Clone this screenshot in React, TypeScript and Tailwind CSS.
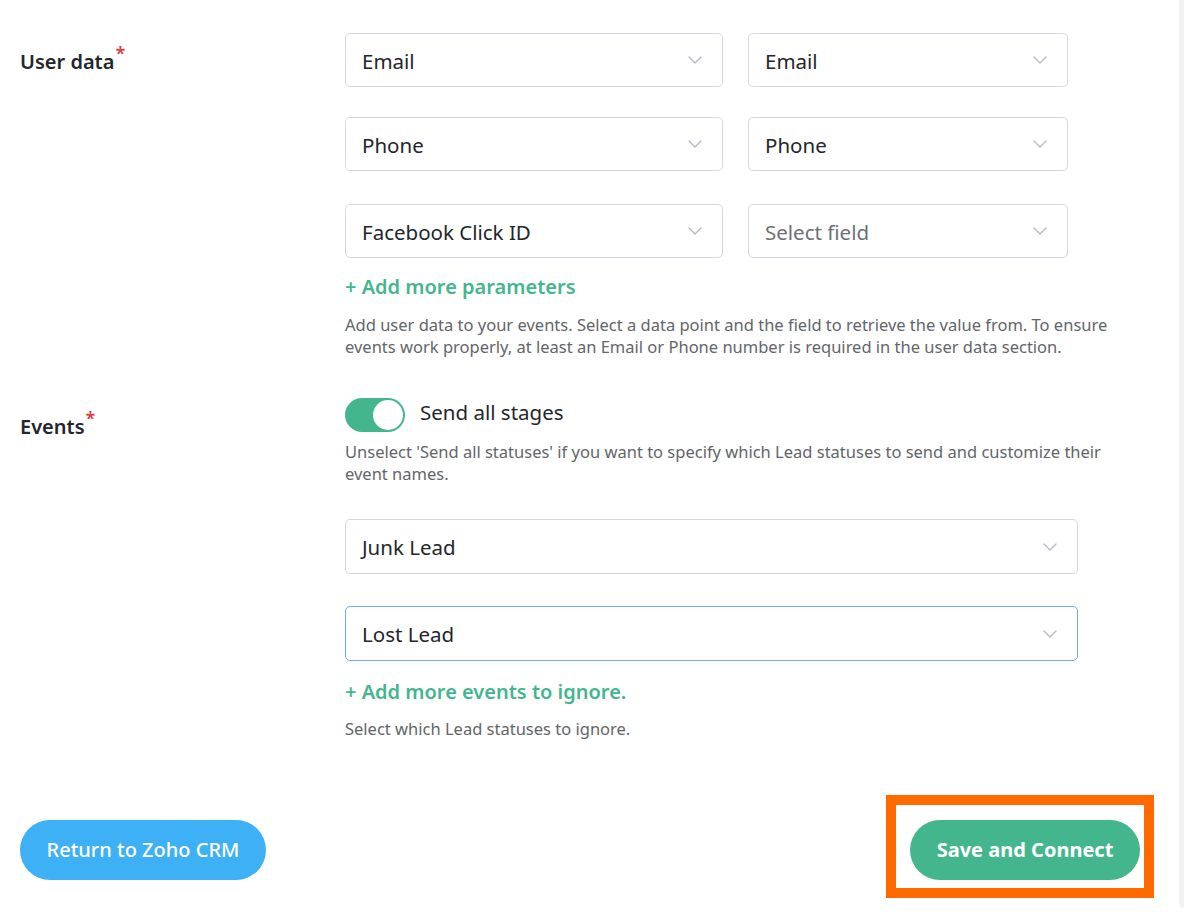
import React from "react";

const font = { fontFamily: '"Noto Sans", "Open Sans", Arial, sans-serif' };

function Chevron() {
  return (
    <svg width="14" height="8" viewBox="0 0 14 8" fill="none" className="shrink-0">
      <path d="M1 1l6 6 6-6" stroke="#b4bac3" strokeWidth="1.4" strokeLinecap="round" strokeLinejoin="round" />
    </svg>
  );
}

function SelectBox({
  value,
  placeholder,
  size,
  borderClass = "border-[#d3d9e0]",
}: {
  value?: string;
  placeholder?: string;
  size: string;
  borderClass?: string;
}) {
  return (
    <div
      className={`${size} flex items-center justify-between pl-4 pr-5 rounded-[5px] bg-white border ${borderClass}`}
    >
      <span className={`text-[20.5px] pt-[2px] ${value ? "text-[#23262b]" : "text-[#6b7079]"}`}>
        {value ?? placeholder}
      </span>
      <Chevron />
    </div>
  );
}

function Label({ text }: { text: string }) {
  return (
    <div className="pt-[15px] text-[20px] leading-[28px] font-semibold text-[#23262b] flex items-start">
      {text}
      <span className="text-[#e23a45] text-[18px] leading-none ml-[1px] -mt-[4px] font-semibold">*</span>
    </div>
  );
}

export default function App() {
  const userRows: [string, string | undefined][] = [
    ["Email", "Email"],
    ["Phone", "Phone"],
    ["Facebook Click ID", undefined],
  ];

  return (
    <div className="flex w-[1184px] h-[916px] bg-white" style={font}>
      <div className="flex-1 pl-5 pt-[33px]">
        <div className="grid grid-cols-[325px_1fr]">
          <Label text="User data" />
          <div className="flex flex-col">
            {userRows.map(([left, right], i) => (
              <div
                key={left}
                className={`flex gap-[25px] ${i === 1 ? "mt-[30px]" : ""} ${i === 2 ? "mt-[33px]" : ""}`}
              >
                <SelectBox value={left} size="w-[378px] h-[54px]" />
                <SelectBox value={right} placeholder="Select field" size="w-[320px] h-[54px]" />
              </div>
            ))}
            <button className="mt-[15px] self-start text-[20px] leading-[28px] font-semibold text-[#44b68e]">
              + Add more parameters
            </button>
            <p className="mt-[13px] text-[16.5px] leading-[22px] text-[#62656a] whitespace-nowrap">
              Add user data to your events. Select a data point and the field to retrieve the value from. To ensure
              <br />
              events work properly, at least an Email or Phone number is required in the user data section.
            </p>
          </div>

          <div className="mt-[40px]">
            <Label text="Events" />
          </div>
          <div className="mt-[40px] flex flex-col">
            <div className="flex items-center gap-[15px]">
              <div className="w-[60px] h-[34px] rounded-full bg-[#44b68e] p-[2px] flex justify-end">
                <div className="w-[30px] h-[30px] rounded-full bg-white" />
              </div>
              <span className="text-[20.5px] text-[#23262b] -mt-[5px]">Send all stages</span>
            </div>
            <p className="mt-[9px] text-[16.5px] leading-[22px] text-[#62656a] whitespace-nowrap">
              Unselect 'Send all statuses' if you want to specify which Lead statuses to send and customize their
              <br />
              event names.
            </p>
            <div className="mt-[34px]">
              <SelectBox value="Junk Lead" size="w-[733px] h-[55px]" />
            </div>
            <div className="mt-[32px]">
              <SelectBox value="Lost Lead" size="w-[733px] h-[55px]" borderClass="border-[#6aaef0]" />
            </div>
            <button className="mt-[17px] self-start text-[20px] leading-[28px] font-semibold text-[#44b68e]">
              + Add more events to ignore.
            </button>
            <p className="mt-[12px] text-[16.5px] leading-[22px] text-[#62656a]">
              Select which Lead statuses to ignore.
            </p>
          </div>
        </div>

        <div className="mt-[80px] flex items-center justify-between pr-[39px]">
          <button className="h-[60px] w-[246px] rounded-full bg-[#3db0f6] text-white text-[20px] font-medium">
            Return to Zoho CRM
          </button>
          <div className="relative">
            <div className="absolute -left-[24px] -right-[14px] -top-[25px] -bottom-[18px] border-[10px] border-[#ff6a00]" />
            <button className="h-[60px] w-[230px] rounded-full bg-[#44b68e] text-white text-[20px] font-bold">
              Save and Connect
            </button>
          </div>
        </div>
      </div>
      <div className="w-[5px] h-[908px] bg-[#f3f3f3] rounded-b-[4px]" />
    </div>
  );
}
